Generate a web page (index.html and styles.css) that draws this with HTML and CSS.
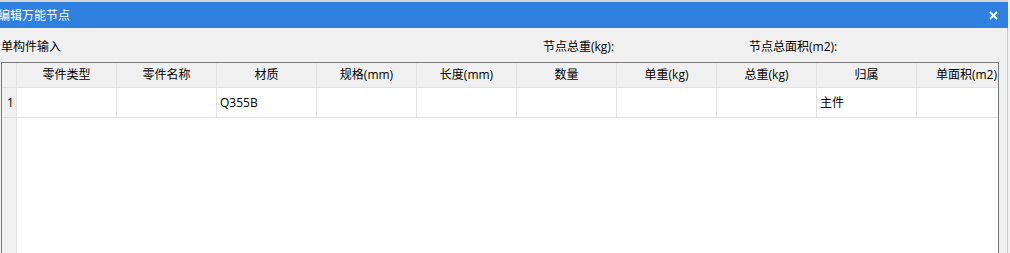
FILE: index.html
```html
<!DOCTYPE html>
<html lang="zh">
<head>
<meta charset="utf-8">
<link rel="stylesheet" href="styles.css">
</head>
<body>
<div class="window">
  <div class="titlebar">
    <span class="title">编辑万能节点</span>
    <svg class="close" width="9" height="9" viewBox="0 0 9 9"><path d="M1 1 L8 8 M8 1 L1 8" stroke="#fff" stroke-width="1.8" fill="none"/></svg>
  </div>
  <div class="content">
    <div class="infobar">
      <span>单构件输入</span>
      <span>节点总重(kg):</span>
      <span>节点总面积(m2):</span>
    </div>
    <div class="table">
      <div class="row head">
        <div class="rh"></div>
        <div class="hc">零件类型</div>
        <div class="hc">零件名称</div>
        <div class="hc">材质</div>
        <div class="hc">规格(mm)</div>
        <div class="hc">长度(mm)</div>
        <div class="hc">数量</div>
        <div class="hc">单重(kg)</div>
        <div class="hc">总重(kg)</div>
        <div class="hc">归属</div>
        <div class="hc">单面积(m2)</div>
      </div>
      <div class="row data">
        <div class="rh">1</div>
        <div class="dc"></div>
        <div class="dc"></div>
        <div class="dc">Q355B</div>
        <div class="dc"></div>
        <div class="dc"></div>
        <div class="dc"></div>
        <div class="dc"></div>
        <div class="dc"></div>
        <div class="dc">主件</div>
        <div class="dc"></div>
      </div>
      <div class="row filler">
        <div class="rh"></div>
        <div class="blank"></div>
      </div>
    </div>
  </div>
</div>
</body>
</html>
```

FILE: styles.css
```css
html, body {
  margin: 0;
  padding: 0;
  height: 100%;
  overflow: hidden;
  background: #f0f0f0;
}

body {
  font-family: "Open Sans", "Noto Sans CJK SC", "Microsoft YaHei", sans-serif;
  font-size: 12px;
  color: #000;
}

.window {
  width: 1008px;
  height: 100%;
  display: flex;
  flex-direction: column;
  border-top: 2px solid #d2d2d2;
  border-right: 1px solid #c3cad6;
  box-sizing: border-box;
  background: #f0f0f0;
}

.titlebar {
  height: 26px;
  flex: none;
  background: #2e80e1;
  color: #fff;
  display: flex;
  align-items: center;
  justify-content: space-between;
  padding: 1px 0 0 0;
  box-sizing: border-box;
  margin-right: -1px;
}

.title {
  margin-left: -2px;
  line-height: 16px;
}

.close {
  margin-right: 10px;
  margin-top: -1px;
}

.content {
  flex: 1;
  display: flex;
  flex-direction: column;
  min-height: 0;
}

.infobar {
  display: grid;
  grid-template-columns: 542px 206px auto;
  padding: 11px 0 7px 1px;
  line-height: 16px;
  flex: none;
}

.table {
  margin-left: 1px;
  width: 998px;
  height: 220px;
  flex: none;
  border: 1px solid #7b7b7b;
  box-sizing: border-box;
  background: #fff;
  overflow: hidden;
  display: flex;
  flex-direction: column;
}

.row {
  display: grid;
  grid-template-columns: 15px repeat(10, 100px);
  width: 1015px;
}

.row > div {
  box-sizing: border-box;
  border-right: 1px solid #e2e2e2;
  border-bottom: 1px solid #e2e2e2;
  white-space: nowrap;
}

.head {
  height: 25px;
  background: #f0f0f0;
}

.hc {
  text-align: center;
  line-height: 24px;
  border-right-color: #e6e6e6;
}

.rh {
  background: #f0f0f0;
  padding-left: 5px;
}

.data {
  height: 30px;
}

.data > div {
  line-height: 29px;
}

.dc {
  padding-left: 3px;
}

.filler {
  flex: 1;
}

.filler > div {
  border-bottom: none;
}

.filler .blank {
  grid-column: 2 / -1;
  border-right: none;
}
```
